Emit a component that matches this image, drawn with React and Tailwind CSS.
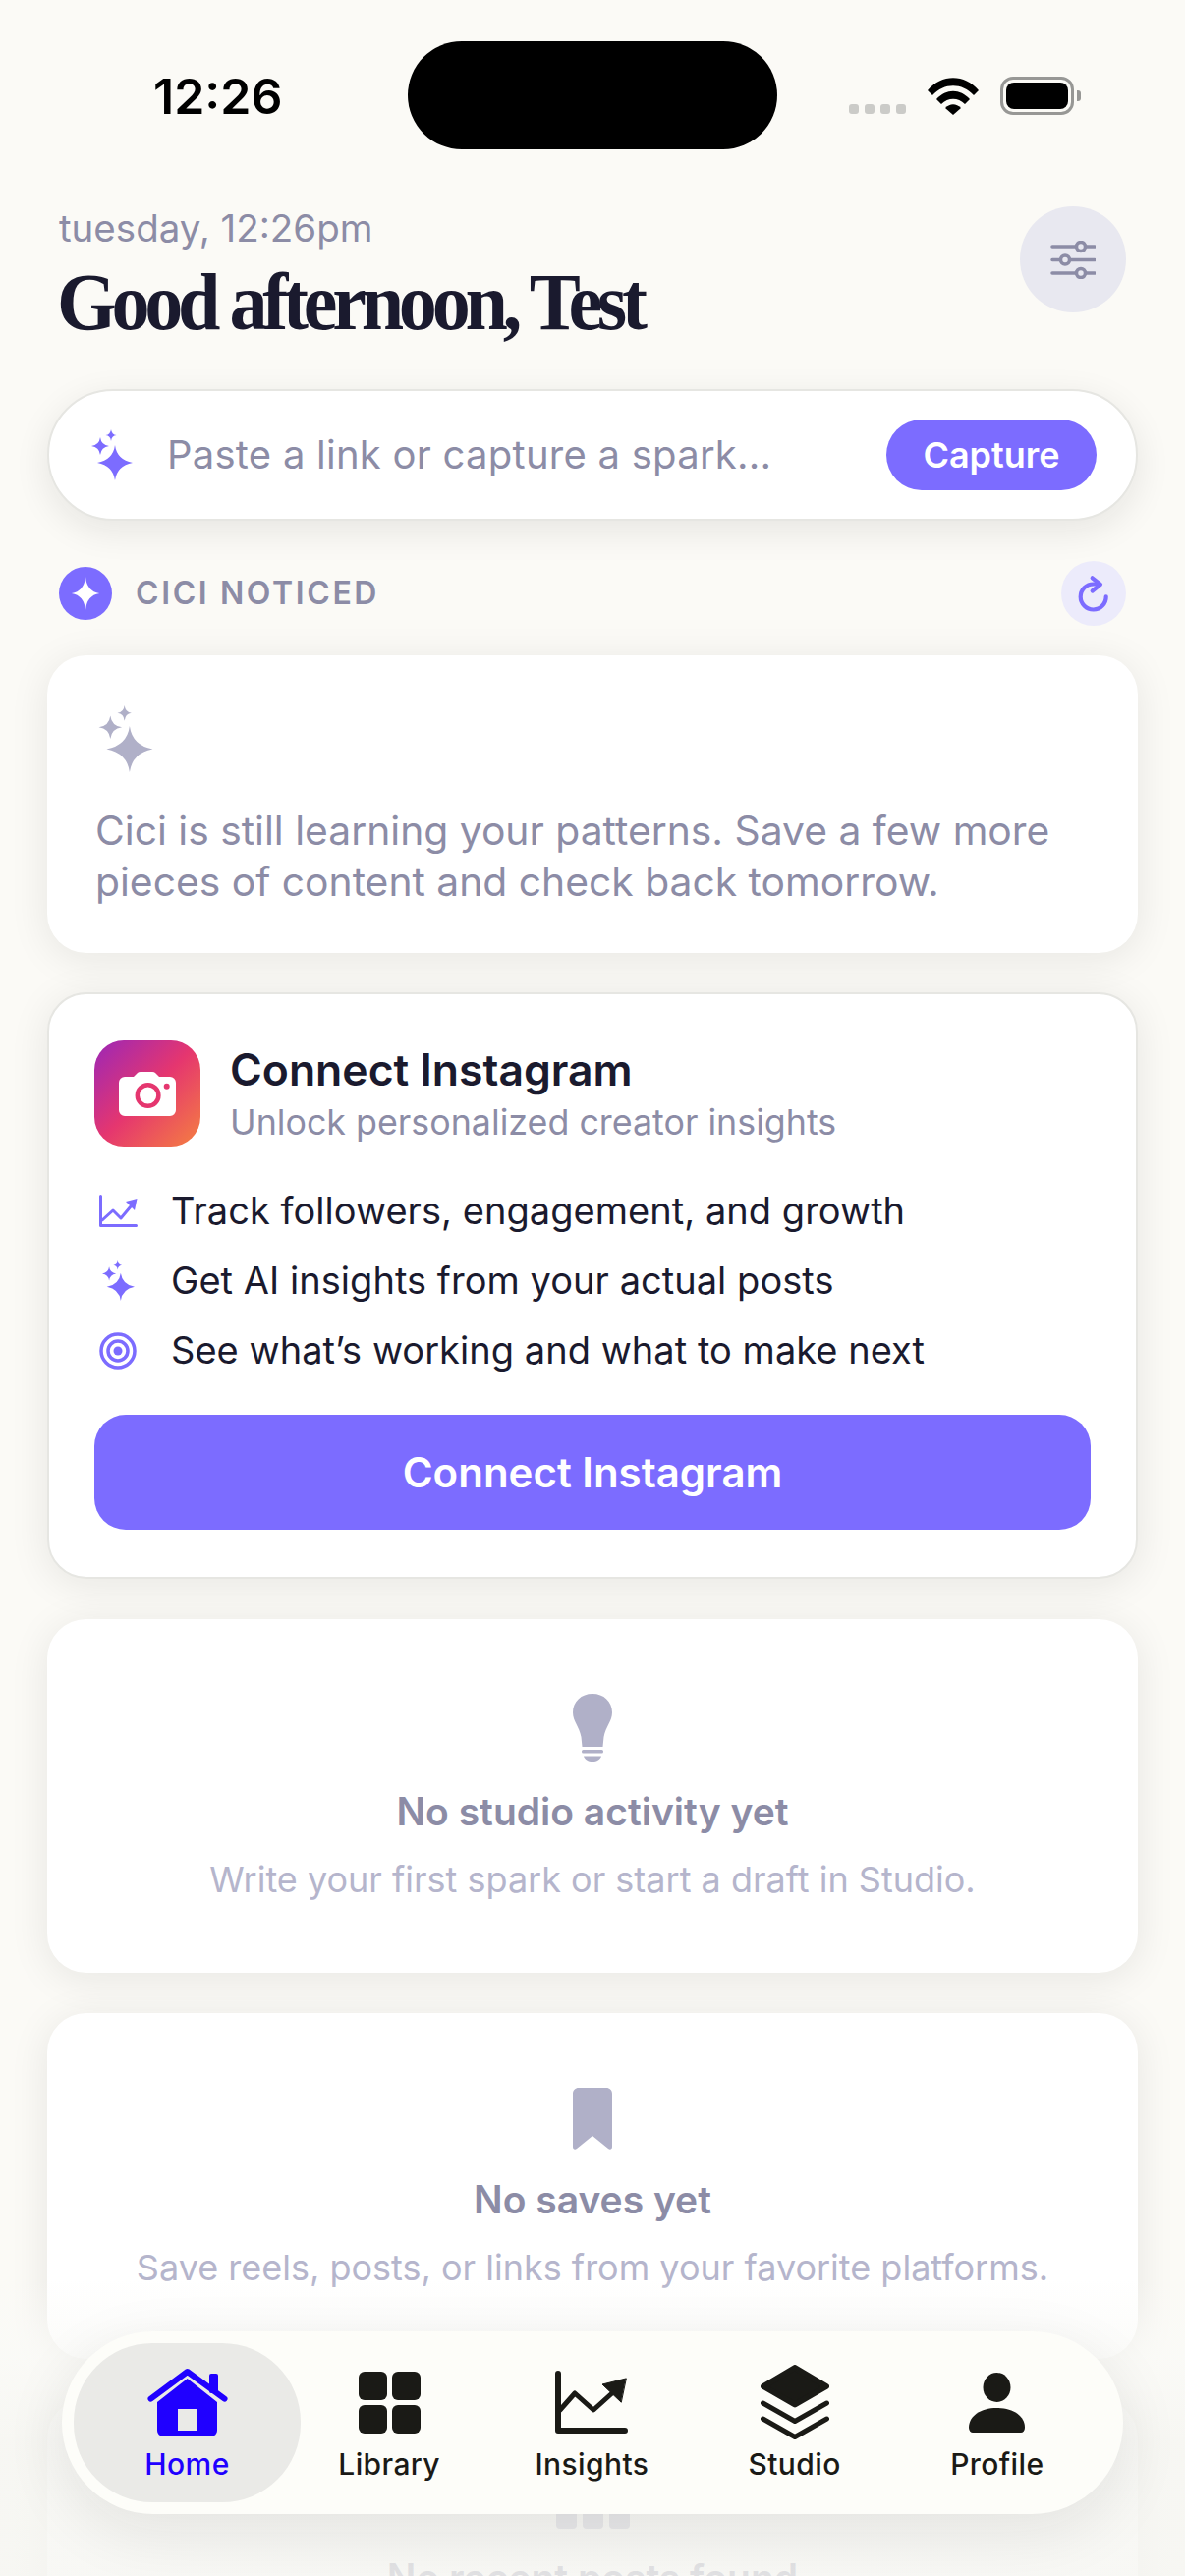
import React from "react";

const Sparkles = ({ className }) => (
  <svg viewBox="0 0 42 52" className={className} fill="currentColor">
    <path d="M24 16Q26 31 42 34Q26 37 24 52Q22 37 6 34Q22 31 24 16z" />
    <path d="M9 8Q10 16 18 17Q10 18 9 26Q8 18 0 17Q8 16 9 8z" />
    <path d="M20 0Q20.600 5.400 25.500 6Q20.600 6.600 20 12Q19.400 6.600 14.500 6Q19.400 5.400 20 0z" />
  </svg>
);

const Card = ({ className = "", children }) => (
  <section className={`rounded-[40px] bg-white shadow-[0_6px_40px_rgba(26,26,20,0.085)] ${className}`}>
    {children}
  </section>
);

const Empty = ({ icon, title, sub, className = "" }) => (
  <Card className={`flex flex-col items-center pt-[76px] ${className}`}>
    {icon}
    <h3 className="mt-[28px] text-[39px] leading-[46px] font-semibold text-[#8c8ca6]">{title}</h3>
    <p className="mt-[24px] text-[36px] leading-[44px] text-[#b5b5cc]">{sub}</p>
  </Card>
);

const Feature = ({ icon, children }) => (
  <li className="flex h-[71px] items-center">
    <span className="flex w-[48px] justify-center">{icon}</span>
    <span className="ml-[30px] text-[38px] tracking-[0.04px] text-[#1a1a2e]">{children}</span>
  </li>
);

const NavItem = ({ icon, label, active }) => (
  <div className={`flex h-[162px] flex-col items-center pt-[22px] ${active ? "-mr-[13px] w-[231px] rounded-[80px] bg-[#eaeae7] text-[#2000ff]" : "flex-1 text-[#1a1a16]"}`}>
    <span className="flex h-[76px] items-center">{icon}</span>
    <span className="mt-[7px] text-[30px] leading-[36px] font-medium tracking-[0.4px]">{label}</span>
  </div>
);

export default function App() {
  return (
    <div className="relative h-[2622px] w-[1206px] overflow-hidden bg-[#fbfaf6] font-['Inter',sans-serif]">
      <header className="flex h-[184px] items-start justify-between">
        <div className="ml-[156px] mt-[68px] text-[50px] leading-[60px] font-semibold text-black">12:26</div>
        <div className="absolute left-[415px] top-[42px] h-[110px] w-[376px] rounded-[55px] bg-black" />
        <div className="mr-[106px] mt-[78px] flex items-end">
          <div className="mb-[1px] flex gap-[6px]">
            <span className="h-[10px] w-[10px] rounded-[3px] bg-[#cbcbc8]" />
            <span className="h-[10px] w-[10px] rounded-[3px] bg-[#cbcbc8]" />
            <span className="h-[10px] w-[10px] rounded-[3px] bg-[#cbcbc8]" />
            <span className="h-[10px] w-[10px] rounded-[3px] bg-[#cbcbc8]" />
          </div>
          <svg viewBox="0 0 52 38" className="ml-[22px] h-[38px] w-[52px]" fill="#000">
            <path d="M0 13C14 -4 38 -4 52 13L47 18C35 5 17 5 5 18z" />
            <path d="M9 22C19 11 33 11 43 22L38 27C31 20 21 20 14 27z" />
            <path d="M18 31C23 26 29 26 34 31L26 38z" />
          </svg>
          <div className="ml-[22px] flex items-center">
            <div className="h-[39px] w-[75px] rounded-[13px] border-[3px] border-[#979795] p-[3px]">
              <div className="h-full w-full rounded-[8px] bg-black" />
            </div>
            <div className="ml-[3px] h-[11px] w-[4px] rounded-r-[3px] bg-[#979795]" />
          </div>
        </div>
      </header>

      <main className="px-[48px]">
        <div className="flex items-start justify-between px-[12px] pt-[26px]">
          <div>
            <p className="text-[38.500px] leading-[44px] text-[#8c8ca6]">tuesday, 12:26pm</p>
            <h1 className="-ml-[2px] mt-[8px] origin-left scale-x-[0.952] whitespace-nowrap font-['Liberation_Serif',serif] text-[82px] leading-[92px] font-bold tracking-[-5.5px] text-[#1a1a2e]">Good afternoon, Test</h1>
          </div>
          <button className="flex h-[108px] w-[108px] items-center justify-center rounded-full bg-[#e8e8f0]">
            <svg viewBox="0 0 46 39" className="h-[39px] w-[46px]" fill="#e8e8f0" stroke="#8c8ca6" strokeWidth="3.500" strokeLinecap="round">
              <path d="M2 6h43M2 19.500h43M2 33h43" />
              <circle cx="31" cy="6" r="4.500" />
              <circle cx="15" cy="19.500" r="4.500" />
              <circle cx="31" cy="33" r="4.500" />
            </svg>
          </button>
        </div>

        <div className="mt-[42px] flex h-[134px] items-center rounded-[67px] border-2 border-[#e6e6e2] bg-white pl-[43px] pr-[40px] shadow-[0_10px_36px_rgba(26,26,20,0.09)]">
          <Sparkles className="h-[52px] w-[42px] text-[#7c6cff]" />
          <span className="ml-[35px] flex-1 text-[40px] tracking-[0.25px] text-[#8c8ca6]">Paste a link or capture a spark...</span>
          <button className="flex h-[72px] w-[214px] items-center justify-center rounded-[36px] bg-[#7c6cff] text-[36px] font-semibold text-white">Capture</button>
        </div>

        <div className="mt-[41px] flex h-[66px] items-center px-[12px]">
          <span className="flex h-[54px] w-[54px] items-center justify-center rounded-full bg-[#7c6cff]">
            <svg viewBox="0 0 24 24" className="h-[34px] w-[34px]" fill="#fff"><path d="M12 0Q13 10.500 22 12Q13 13.500 12 24Q11 13.500 2 12Q11 10.500 12 0z" /></svg>
          </span>
          <span className="ml-[24px] flex-1 text-[32px] font-semibold tracking-[2.600px] text-[#8c8ca6]">CICI NOTICED</span>
          <span className="flex h-[66px] w-[66px] items-center justify-center rounded-full bg-[#ecebfb]">
            <svg viewBox="0 0 66 66" className="h-[66px] w-[66px]" fill="none" stroke="#7c6cff" strokeWidth="4.200" strokeLinecap="round" strokeLinejoin="round">
              <path d="M45.700 36.300A13 13 0 1 1 32.700 23.500H39" />
              <path d="M31.700 17.300L40 23.800L31.700 30.500" />
            </svg>
          </span>
        </div>

        <Card className="mt-[30px] h-[303px] px-[49px] pt-[51px]">
          <Sparkles className="ml-[3px] h-[68px] w-[56px] text-[#b0b0c8]" />
          <p className="mt-[33px] text-[40.800px] leading-[52px] text-[#8c8ca6]">Cici is still learning your patterns. Save a few more pieces of content and check back tomorrow.</p>
        </Card>

        <section className="mt-[40px] h-[597px] rounded-[40px] border-2 border-[#e6e6e2] bg-white px-[46px] pt-[47px] shadow-[0_6px_40px_rgba(26,26,20,0.085)]">
          <div className="flex items-center">
            <div className="flex h-[108px] w-[108px] items-center justify-center rounded-[30px] bg-[linear-gradient(135deg,#9b27b8_0%,#e5366f_50%,#f58040_100%)]">
              <svg viewBox="0 0 58 45" className="h-[45px] w-[58px]">
                <path fill="#fff" d="M6 5H15L19 1Q20 0 22 0H34Q36 0 37 1L41 5H52a6 6 0 0 1 6 6V39a6 6 0 0 1-6 6H6a6 6 0 0 1-6-6V11a6 6 0 0 1 6-6z" />
                <circle cx="29.600" cy="24" r="10.800" fill="none" stroke="#e5366f" strokeWidth="4.500" />
                <circle cx="48.700" cy="14.700" r="3" fill="#e5366f" />
              </svg>
            </div>
            <div className="ml-[30px]">
              <h2 className="text-[44.500px] leading-[55px] font-semibold text-[#1a1a2e]">Connect Instagram</h2>
              <p className="mt-[3px] text-[35.800px] leading-[44px] text-[#8c8ca6]">Unlock personalized creator insights</p>
            </div>
          </div>
          <ul className="mt-[30px]">
            <Feature icon={<svg viewBox="0 0 39 33" className="h-[33px] w-[39px]" fill="none" stroke="#7c6cff" strokeWidth="3" strokeLinecap="round" strokeLinejoin="round"><path d="M1.500 1.500V31.500H37.500" /><path d="M3 26L14 16L22 24L32 12" /><path d="M38.500 4L27 7L36 16z" fill="#7c6cff" stroke="none" /></svg>}>Track followers, engagement, and growth</Feature>
            <Feature icon={<Sparkles className="h-[41px] w-[33px] text-[#7c6cff]" />}>Get AI insights from your actual posts</Feature>
            <Feature icon={<svg viewBox="0 0 38 38" className="h-[38px] w-[38px]" fill="none" stroke="#7c6cff" strokeWidth="3.500"><circle cx="19" cy="19" r="17" /><circle cx="19" cy="19" r="10" /><circle cx="19" cy="19" r="4.500" fill="#7c6cff" stroke="none" /></svg>}>See what’s working and what to make next</Feature>
          </ul>
          <button className="mt-[30px] flex h-[117px] w-full items-center justify-center rounded-[32px] bg-[#7c6cff] text-[42px] font-semibold text-white">Connect Instagram</button>
        </section>

        <Empty
          className="mt-[41px] h-[360px]"
          title="No studio activity yet"
          sub="Write your first spark or start a draft in Studio."
          icon={<svg viewBox="0 0 40 69" className="h-[69px] w-[40px]" fill="#b0b0c8"><path d="M20 0C31.500 0 40 8 40 19C40 28 33.500 33 31.500 44L30.500 54H9.500L8.500 44C6.500 33 0 28 0 19C0 8 8.500 0 20 0z" /><rect x="9" y="57" width="22" height="3.500" rx="1.500" /><path d="M11 63.500H29C28 67 24.500 69 20 69S12 67 11 63.500z" /></svg>}
        />

        <Empty
          className="mt-[41px] h-[352px]"
          title="No saves yet"
          sub="Save reels, posts, or links from your favorite platforms."
          icon={<svg viewBox="0 0 40 63" className="h-[63px] w-[40px]" fill="#b0b0c8"><path d="M6 0H34C37.500 0 40 2.500 40 6V60C40 62.500 38 63.500 36 62L20 49L4 62C2 63.500 0 62.500 0 60V6C0 2.500 2.500 0 6 0z" /></svg>}
        />

        <Card className="mt-[41px] flex h-[400px] flex-col items-center pt-[74px]">
          <div className="flex gap-[6px]">
            <span className="h-[58px] w-[21px] rounded-[4px] bg-[#b0b0c8]" />
            <span className="h-[58px] w-[21px] rounded-[4px] bg-[#b0b0c8]" />
            <span className="h-[58px] w-[21px] rounded-[4px] bg-[#b0b0c8]" />
          </div>
          <h3 className="mt-[27px] text-[39px] leading-[46px] font-semibold text-[#8c8ca6]">No recent posts found</h3>
        </Card>
      </main>

      <div className="absolute inset-x-0 bottom-0 h-[302px] bg-[linear-gradient(to_bottom,rgba(250,250,247,0)_0%,rgba(250,250,247,0.78)_26%,rgba(246,246,242,0.8)_55%,rgba(246,246,242,0.8)_100%)]" />

      <nav className="absolute bottom-[63px] left-[63px] flex h-[186px] w-[1080px] items-center rounded-[93px] bg-[#fdfdf9] pl-[12px] pr-[25px] shadow-[0_18px_64px_rgba(26,26,20,0.09)]">
        <NavItem active label="Home" icon={
          <svg viewBox="0 0 82 72" className="h-[72px] w-[82px]" fill="currentColor">
            <path fillRule="evenodd" d="M40.700 12L71 36V65a6 6 0 0 1-6 6H16a6 6 0 0 1-6-6V36zM31 43V65H50V43z" />
            <path d="M3.500 32.700L40.700 5L78.500 32.700" fill="none" stroke="currentColor" strokeWidth="6" strokeLinecap="round" strokeLinejoin="round" />
            <rect x="63" y="7" width="9" height="20" rx="2" />
          </svg>} />
        <div className="flex flex-1">
          <NavItem label="Library" icon={
            <svg viewBox="0 0 63 63" className="h-[63px] w-[63px]" fill="currentColor">
              <rect width="29" height="29" rx="6" /><rect x="34" width="29" height="29" rx="6" /><rect y="34" width="29" height="29" rx="6" /><rect x="34" y="34" width="29" height="29" rx="6" />
            </svg>} />
          <NavItem label="Insights" icon={
            <svg viewBox="0 0 74 64" className="h-[64px] w-[74px]" fill="none" stroke="currentColor" strokeLinecap="round" strokeLinejoin="round">
              <path d="M3 3V61H71" strokeWidth="6" />
              <path d="M5 40L20 23L39 40L59 22" strokeWidth="5" />
              <path d="M72 8L48 14L67 32z" fill="currentColor" strokeWidth="1" />
            </svg>} />
          <NavItem label="Studio" icon={
            <svg viewBox="0 0 70 76" className="h-[76px] w-[70px]" fill="currentColor" stroke="currentColor" strokeLinecap="round" strokeLinejoin="round">
              <path d="M35 3L67 22L35 40.500L3 22z" strokeWidth="6" />
              <path d="M2.500 39L35 57.500L67.500 39" fill="none" strokeWidth="5" />
              <path d="M2.500 55L35 73.500L67.500 55" fill="none" strokeWidth="5" />
            </svg>} />
          <NavItem label="Profile" icon={
            <svg viewBox="0 0 57 61" className="h-[61px] w-[57px]" fill="currentColor">
              <ellipse cx="28.500" cy="15" rx="14" ry="15" />
              <path d="M0 56C0 44 12 36 28.500 36S57 44 57 56C57 59 55 61 53 61H4C2 61 0 59 0 56z" />
            </svg>} />
        </div>
      </nav>
    </div>
  );
}
